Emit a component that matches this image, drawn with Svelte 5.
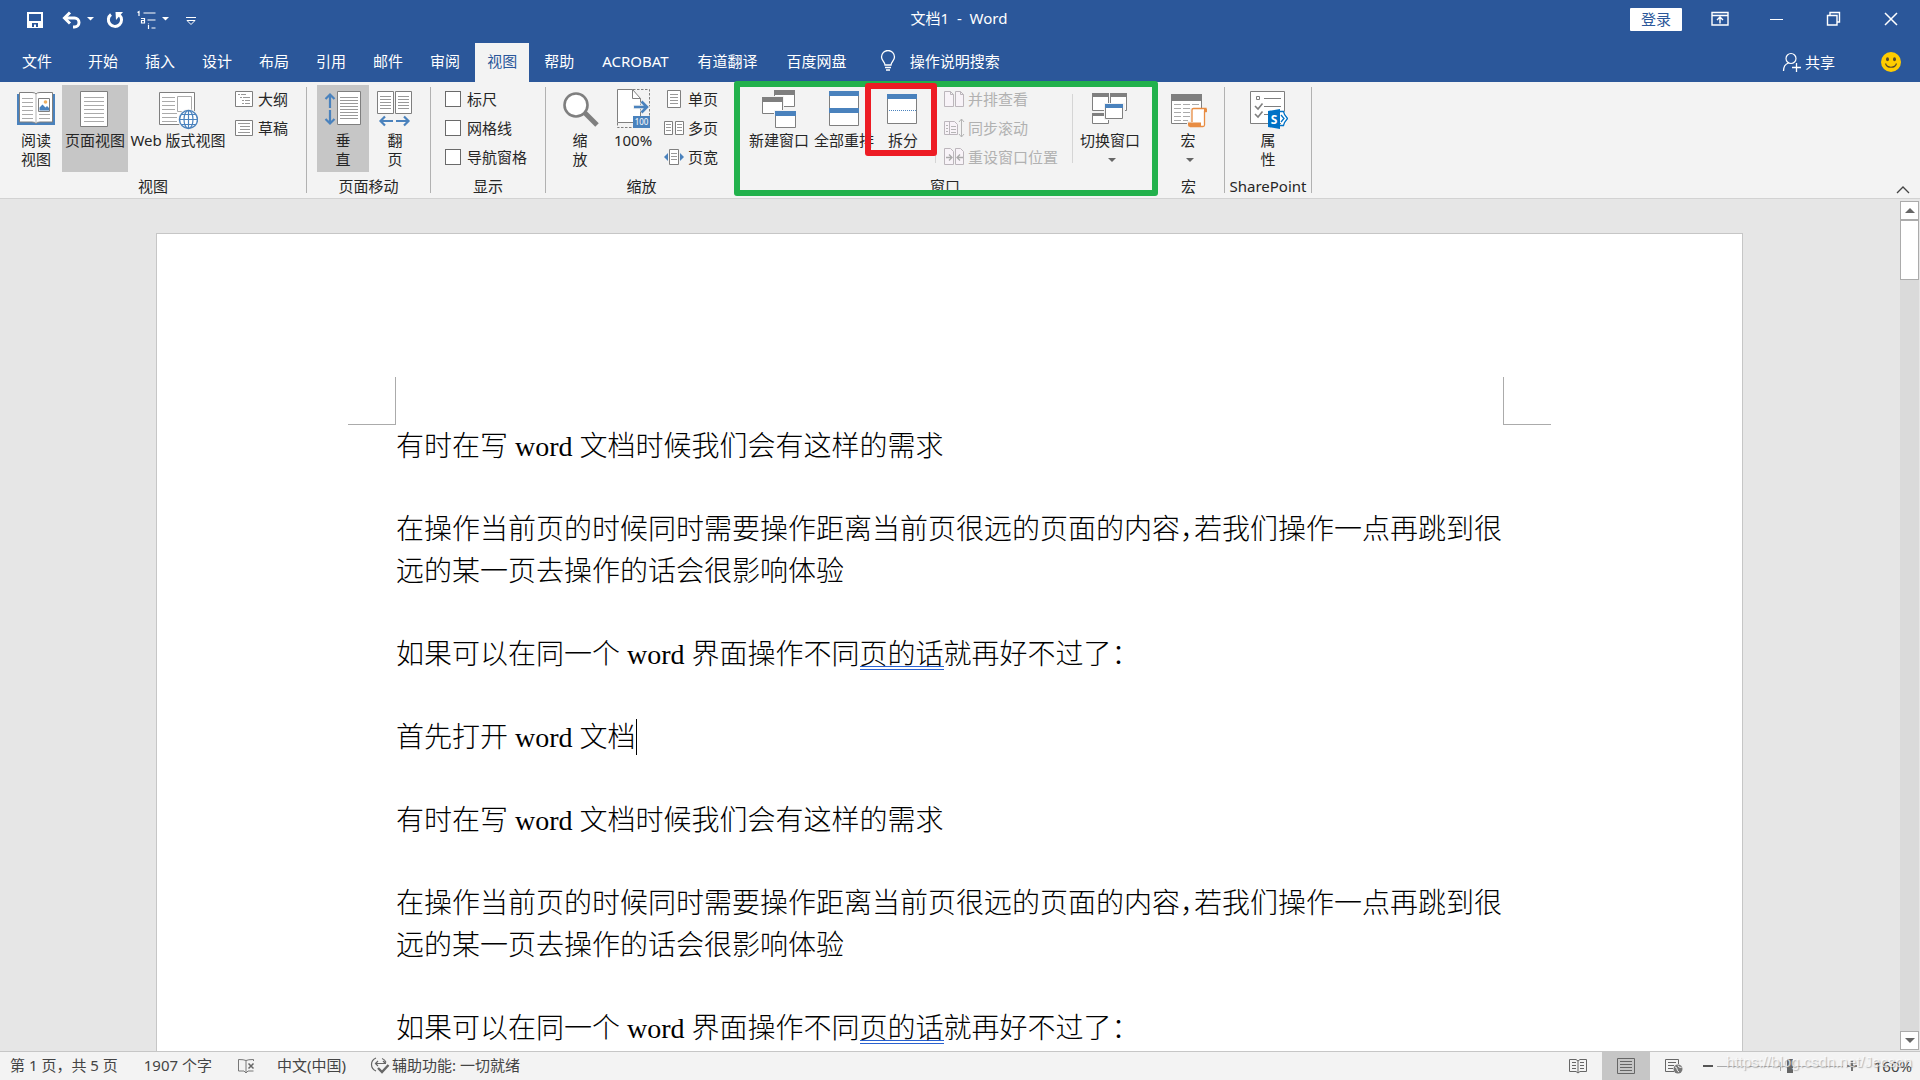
<script>
  const tabs = ['开始', '插入', '设计', '布局', '引用', '邮件', '审阅', '视图', '帮助'];
  const addins = ['ACROBAT', '有道翻译', '百度网盘'];
  const activeTab = '视图';
  const shows = ['标尺', '网格线', '导航窗格'];
  const passes = [0, 1];
  let zoom = $state(58);
</script>

<div class="app">
  <header>
    <div class="titlebar">
      <div class="quick">
        <button aria-label="保存"><svg width="18" height="18" viewBox="0 0 18 18"><path d="M1 1h16v16H1z" fill="#fff"/><path d="M3 3h12v7H3zM6 12h6v4h-2v-2.500H8V16H6z" fill="#2b579a"/></svg></button>
        <button aria-label="撤消" class="undo"><svg width="34" height="18" viewBox="0 0 34 18"><path d="M3 7h9.500a4.500 4.500 0 0 1 0 9H11" fill="none" stroke="#fff" stroke-width="3"/><path d="M8 1.500 2.500 7 8 12.500" fill="none" stroke="#fff" stroke-width="3"/><path d="M25 6h7l-3.500 3.500z" fill="#fff"/></svg></button>
        <button aria-label="重复"><svg width="18" height="18" viewBox="0 0 18 18"><path d="M5 3.500A6.600 6.600 0 1 0 13.500 4" fill="none" stroke="#fff" stroke-width="3"/><path d="M9.500 1H17L10 9z" fill="#fff"/></svg></button>
        <button aria-label="多级列表"><svg width="34" height="20" viewBox="0 0 34 20"><path d="M1.500 2.500 3 1.500V6M7.500 3h12M5 8.500h3.500V13H5.500v-2.500h3M11.500 10h8M12.500 13.500v.8M12.500 15v4M15.500 18h4" fill="none" stroke="#fff" stroke-width="1.200"/><path d="M26 7h7l-3.500 3.500z" fill="#fff"/></svg></button>
        <button aria-label="自定义快速访问工具栏"><svg width="12" height="18" viewBox="0 0 12 18"><path d="M1 6.500h10M2 9.500h8L6 13.500z" fill="none" stroke="#fff"/></svg></button>
      </div>
      <h1>文档1&nbsp; -&nbsp; Word</h1>
      <div class="wincontrols">
        <button class="login">登录</button>
        <button aria-label="功能区显示选项"><svg width="18" height="16" viewBox="0 0 18 16"><path d="M1 1.500h16v12.500H1zM1 4.500h16M9 12.500V6.500M6 9l3-3 3 3" fill="none" stroke="#fff" stroke-width="1.400"/></svg></button>
        <button aria-label="最小化"><svg width="18" height="16" viewBox="0 0 18 16"><path d="M2 8.500h13" stroke="#fff"/></svg></button>
        <button aria-label="还原"><svg width="18" height="16" viewBox="0 0 18 16"><path d="M2.500 4.500h9.500v9.500H2.500zM5 4V1.500h9.500V11H12" fill="none" stroke="#fff" stroke-width="1.400"/></svg></button>
        <button aria-label="关闭"><svg width="18" height="16" viewBox="0 0 18 16"><path d="M3 2l12 12M15 2 3 14" stroke="#fff" stroke-width="1.500"/></svg></button>
      </div>
    </div>
    <nav>
      <button class="tab file">文件</button>
      {#each tabs as tab}
        <button class="tab" class:active={tab === activeTab}>{tab}</button>
      {/each}
      {#each addins as tab}
        <button class="tab addin">{tab}</button>
      {/each}
      <button class="tell"><svg width="16" height="22" viewBox="0 0 16 22"><path d="M5 15c0-3-3.500-4.500-3.500-8a6.500 6.500 0 0 1 13 0c0 3.500-3.500 5-3.500 8zM5 17.500h6M6 20h4" fill="none" stroke="#fff" stroke-width="1.300"/></svg>操作说明搜索</button>
      <div class="navright">
        <button class="share"><svg width="20" height="20" viewBox="0 0 20 20"><circle cx="9" cy="6.500" r="5" fill="none" stroke="#fff" stroke-width="1.200"/><path d="M1.500 19c0-4 2-7 5-8M14.500 11v9M10 15.500h9" fill="none" stroke="#fff" stroke-width="1.300"/></svg>共享</button>
        <button aria-label="反馈"><svg width="20" height="20" viewBox="0 0 20 20"><circle cx="10" cy="10" r="10" fill="#fc0"/><ellipse cx="6.500" cy="7.300" rx="1.500" ry="2" fill="#594a2a"/><ellipse cx="13.500" cy="7.300" rx="1.500" ry="2" fill="#594a2a"/><path d="M4.500 11.500c1.500 5 9.500 5 11 0" fill="none" stroke="#594a2a" stroke-width="1.200"/></svg></button>
      </div>
    </nav>
  </header>

  <div class="ribbon">
    <section class="group view">
      <div class="items">
        <button class="big w52">
          <svg width="40" height="46" viewBox="0 0 40 46"><path d="M1 9h3v28h32V9h3v31H1z" fill="#4a82bd"/><path d="M3.500 7.500H16q3 0 4 1.500 1-1.500 4-1.500h12.500v29.500H24q-3 0-4 1.500-1-1.500-4-1.500H3.500z" fill="#fff" stroke="#7f7f7f"/><path d="M20 9v29" stroke="#b1b1b1"/><path d="M6 13.500h11M6 17.500h11M6 21.500h11M6 25.500h11M6 29.500h11M6 33.500h11M23 29.500h11M23 33.500h11" stroke="#aaa"/><path d="M22.500 13.500h11v13h-11z" fill="#fff" stroke="#7f7f7f"/><path d="M23.500 25.500v-3l3-3 3 3 1.500-1.500 2 2v2.500z" fill="#4a82bd"/><circle cx="29.500" cy="17" r="1.800" fill="#f0b060"/></svg>
          <span>阅读<br />视图</span>
        </button>
        <button class="big w66 pressed">
          <svg width="40" height="46" viewBox="0 0 40 46"><path d="M5.500 6.500h27v35h-27z" fill="#fff" stroke="#7f7f7f"/><path d="M9 12.500h20M9 16.500h20M9 20.500h20M9 24.500h20M9 28.500h20M9 32.500h20M9 36.500h20" stroke="#aaa"/></svg>
          <span>页面视图</span>
        </button>
        <button class="big w100">
          <svg width="40" height="46" viewBox="0 0 40 46"><path d="M1.500 7.500h35v32h-35z" fill="#fff" stroke="#7f7f7f"/><path d="M4 12.500h13M4 16.500h13M4 20.500h13M4 24.500h13M4 28.500h15M4 32.500h15M4 36.500h15" stroke="#aaa"/><path d="M19.500 11.500h14v15h-14z" fill="#fff" stroke="#aaa"/><circle cx="30.500" cy="34.500" r="10.500" fill="#f3f3f3"/><circle cx="30.500" cy="34.500" r="9" fill="#fff" stroke="#4a82bd" stroke-width="1.400"/><ellipse cx="30.500" cy="34.500" rx="4.500" ry="9" fill="none" stroke="#4a82bd" stroke-width="1.200"/><path d="M30.500 25.500v18M21.500 34.500h18M23 29.500h15M23 39.500h15" stroke="#4a82bd" stroke-width="1.200"/></svg>
          <span>Web 版式视图</span>
        </button>
        <div class="stack">
          <button class="row"><svg width="22" height="20" viewBox="0 0 22 20"><path d="M2.500 2.500h17v15h-17z" fill="#fff" stroke="#7f7f7f"/><path d="M5 5.500h2M8 5.500h5M7 8.500h2M10 8.500h7M9 11.500h2M12 11.500h5M9 14.500h2M12 14.500h5" stroke="#999"/></svg>大纲</button>
          <button class="row"><svg width="22" height="20" viewBox="0 0 22 20"><path d="M2.500 2.500h17v15h-17z" fill="#fff" stroke="#7f7f7f"/><path d="M5 5.500h12M7 8.500h10M7 11.500h10M5 14.500h12" stroke="#999"/></svg>草稿</button>
        </div>
      </div>
      <h2>视图</h2>
    </section>
    <i class="sep"></i>
    <section class="group move">
      <div class="items">
        <button class="big w52 pressed">
          <svg width="40" height="46" viewBox="0 0 40 46"><path d="M14.500 6.500h23v33h-23z" fill="#fff" stroke="#7f7f7f"/><path d="M17 12.500h18M17 15.500h18M17 18.500h18M17 21.500h18M17 24.500h18M17 27.500h18M17 30.500h18M17 33.500h18" stroke="#999"/><path d="M7 23V10M2.500 14 7 9.500l4.500 4.500M7 25v13M2.500 34 7 38.500l4.500-4.500" fill="none" stroke="#4a82bd" stroke-width="2.200"/></svg>
          <span>垂<br />直</span>
        </button>
        <button class="big w52">
          <svg width="40" height="46" viewBox="0 0 40 46"><path d="M2.500 6.500h16v22h-16zM20.500 6.500h16v22h-16z" fill="#fff" stroke="#7f7f7f"/><path d="M5 11.500h11M5 14.500h11M5 17.500h11M5 20.500h11M5 23.500h11M23 11.500h11M23 14.500h11M23 17.500h11M23 20.500h11M23 23.500h11" stroke="#999"/><path d="M18 36H6M10 31.500 5.500 36l4.500 4.500M21 36h12M29 31.500l4.500 4.500-4.500 4.500" fill="none" stroke="#4a82bd" stroke-width="2.200"/></svg>
          <span>翻<br />页</span>
        </button>
      </div>
      <h2>页面移动</h2>
    </section>
    <i class="sep"></i>
    <section class="group show">
      <div class="items">
        <div class="stack">
          {#each shows as s}
            <label class="row check"><input type="checkbox" />{s}</label>
          {/each}
        </div>
      </div>
      <h2>显示</h2>
    </section>
    <i class="sep"></i>
    <section class="group zoomg">
      <div class="items">
        <button class="big w52">
          <svg width="40" height="46" viewBox="0 0 40 46"><path d="M25 28 37 40" stroke="#7f7f7f" stroke-width="5"/><circle cx="16" cy="20" r="11.500" fill="#fff" stroke="#7f7f7f" stroke-width="2.600"/></svg>
          <span>缩<br />放</span>
        </button>
        <button class="big w54">
          <svg width="40" height="46" viewBox="0 0 40 46"><path d="M20 4.500h16.500v27M4.500 38v4.500h15" fill="none" stroke="#7f7f7f" stroke-dasharray="2.500 1.500"/><path d="M4.500 4.500h15l8 9V37.500h-23z" fill="#fff" stroke="#7f7f7f"/><path d="M19.500 4.500v9h8" fill="none" stroke="#7f7f7f"/><path d="M20 22h13M28.500 16.500 34 22l-5.500 5.500" fill="none" stroke="#f3f3f3" stroke-width="4.500"/><path d="M21 22h12M28.500 16.500 34 22l-5.500 5.500" fill="none" stroke="#4a82bd" stroke-width="2.600"/><path d="M20 31h17v12H20z" fill="#4a82bd"/><text x="28.500" y="40" text-anchor="middle" font-size="8" fill="#fff">100</text></svg>
          <span>100%</span>
        </button>
        <div class="stack">
          <button class="row"><svg width="22" height="20" viewBox="0 0 22 20"><path d="M4.500 1.500h13v17h-13z" fill="#fff" stroke="#7f7f7f"/><path d="M7 5.500h8M7 8.500h8M7 11.500h8M7 14.500h8" stroke="#999"/></svg>单页</button>
          <button class="row"><svg width="22" height="20" viewBox="0 0 22 20"><path d="M1.500 3.500h8v13h-8zM12.500 3.500h8v13h-8z" fill="#fff" stroke="#7f7f7f"/><path d="M3 6.500h5M3 9.500h5M3 12.500h5M14 6.500h5M14 9.500h5M14 12.500h5" stroke="#999"/></svg>多页</button>
          <button class="row"><svg width="22" height="20" viewBox="0 0 22 20"><path d="M6.500 2.500h9v15h-9z" fill="#fff" stroke="#7f7f7f"/><path d="M8 6.500h6M8 9.500h6M8 12.500h6" stroke="#999"/><path d="M5 6v8l-4-4zM17 6v8l4-4z" fill="#4a82bd"/></svg>页宽</button>
        </div>
      </div>
      <h2>缩放</h2>
    </section>
    <i class="sep"></i>
    <section class="group windowg">
      <div class="items">
        <button class="big w64">
          <svg width="40" height="46" viewBox="0 0 40 46"><path d="M15.500 5.500h20v16h-20z" fill="#fff" stroke="#7f7f7f"/><path d="M15 5h21v5H15z" fill="#7f7f7f"/><path d="M2 11h23v19H2z" fill="#f3f3f3"/><path d="M3.500 12.500h20v16h-20z" fill="#fff" stroke="#7f7f7f"/><path d="M3 12h21v5H3z" fill="#7f7f7f"/><path d="M15 25h23v19H15z" fill="#f3f3f3"/><path d="M16.500 26.500h20v16h-20z" fill="#fff" stroke="#7f7f7f"/><path d="M16 26h21v5H16z" fill="#4a82bd"/></svg>
          <span>新建窗口</span>
        </button>
        <button class="big w66">
          <svg width="40" height="46" viewBox="0 0 40 46"><path d="M5.500 6.500h29v34h-29z" fill="#fff" stroke="#7f7f7f"/><path d="M5 6h30v5H5zM5 23h30v5H5z" fill="#4a82bd"/></svg>
          <span>全部重排</span>
        </button>
        <button class="big w52 split">
          <svg width="40" height="46" viewBox="0 0 40 46"><path d="M4.500 9.500h29v29h-29z" fill="#fff" stroke="#7f7f7f"/><path d="M4 9h30v5H4z" fill="#4a82bd"/><path d="M6 25.500h27" stroke="#4a82bd" stroke-dasharray="1 1"/></svg>
          <span>拆分</span>
          <i class="mark red"></i>
        </button>
        <i class="minisep before"></i>
        <div class="stack">
          <button class="row" disabled><svg width="22" height="20" viewBox="0 0 22 20"><path d="M1.500 2.500h6l3 3v12h-9zM12.500 2.500h5l3 3v12h-8zM7.500 2.500v3h3M17.500 2.500v3h3" fill="#f8f3f8" stroke="#bcb6bc"/></svg>并排查看</button>
          <button class="row" disabled><svg width="22" height="20" viewBox="0 0 22 20"><path d="M1.500 3.500h10l3 3v10h-13zM6.500 3.500v13" fill="#f8f3f8" stroke="#bcb6bc"/><path d="M8 8.500h5M8 11.500h5M8 14.500h5M3 7.500h2M3 10.500h2M3 13.500h2M18.500 1v18M16 4l2.500-3L21 4M16 16l2.500 3 2.500-3" fill="none" stroke="#b5b5b5"/></svg>同步滚动</button>
          <button class="row" disabled><svg width="22" height="20" viewBox="0 0 22 20"><path d="M1.500 1.500h6l3 3v13h-9zM12.500 1.500h5l3 3v13h-8z" fill="#f8f3f8" stroke="#bcb6bc"/><path d="M3 10.500h6M6 7.500l3 3-3 3M20 10.500h-6M17 7.500l-3 3 3 3" fill="none" stroke="#aaa" stroke-width="1.300"/></svg>重设窗口位置</button>
        </div>
        <i class="minisep after"></i>
        <button class="big w60">
          <svg width="40" height="46" viewBox="0 0 40 46"><path d="M2.500 8.500h16v17h-16zM20.500 8.500h16v17h-16zM2.500 28.500h16v10h-16z" fill="#fff" stroke="#7f7f7f"/><path d="M2 8h17v4H2zM20 8h17v4H20zM2 28h17v3H2z" fill="#7f7f7f"/><path d="M14 18h21v17H14z" fill="#f3f3f3"/><path d="M15.500 19.500h17v14h-17z" fill="#fff" stroke="#7f7f7f"/><path d="M15 19h18v4H15z" fill="#4a82bd"/></svg>
          <span>切换窗口</span>
          <i class="caret"></i>
        </button>
      </div>
      <h2>窗口</h2>
      <i class="mark green"></i>
    </section>
    <i class="sep"></i>
    <section class="group macro">
      <div class="items">
        <button class="big w70">
          <svg width="40" height="46" viewBox="0 0 40 46"><path d="M3.500 9.500h30v29h-30z" fill="#fff" stroke="#7f7f7f"/><path d="M3 9h31v7H3z" fill="#7f7f7f"/><path d="M6 19.500h7M15 19.500h7M24 19.500h7M6 23.500h7M15 23.500h7M6 27.500h7M15 27.500h7M6 31.500h7M15 31.500h7M6 35.500h7M15 35.500h5" stroke="#aaa"/><path d="M22 23h18v4h-3v15H19v-6h3z" fill="#f3f3f3"/><path d="M24 37V25q0-1.500 1.500-1.500H38v3h-1.500V40q0 1.500-1.500 1.500H22" fill="#fff" stroke="#e88c42" stroke-width="1.300"/><path d="M20 37.500h13v4.500H22q-2 0-2-2zM36 24h3v3h-3z" fill="#e88c42"/></svg>
          <span>宏</span>
          <i class="caret"></i>
        </button>
      </div>
      <h2>宏</h2>
    </section>
    <i class="sep"></i>
    <section class="group sharepoint">
      <div class="items">
        <button class="big w86">
          <svg width="40" height="46" viewBox="0 0 40 46"><path d="M2.500 6.500h34v32h-34z" fill="#fff" stroke="#7f7f7f"/><path d="M8.500 11.500h3v3h-3zM16 13.500h17M16 21.500h17M16 29.500h6" fill="none" stroke="#7f7f7f"/><path d="M7 21l3 3 4.500-5.500M7 29l3 3 4.500-5.500" fill="none" stroke="#7f7f7f" stroke-width="1.600"/><path d="M33 26h3l5 7.500-5 7.500h-3z" fill="#fff"/><path d="M32 26.500h3.500l1 3 3 4-3 4-1 3H32M33 30l3 3.500-3 3.500" fill="none" stroke="#0072c6" stroke-width="1.300"/><path d="M20 26l12-2v20l-12-2z" fill="#0072c6"/><text x="26" y="38.500" text-anchor="middle" font-size="12" font-weight="700" fill="#fff">S</text></svg>
          <span>属<br />性</span>
        </button>
      </div>
      <h2>SharePoint</h2>
    </section>
    <i class="sep"></i>
    <button class="collapse" aria-label="折叠功能区"><svg width="14" height="8" viewBox="0 0 14 8"><path d="M1 7l6-6 6 6" fill="none" stroke="#444" stroke-width="1.300"/></svg></button>
  </div>

  <main>
    <div class="canvas">
      <article>
        <div class="corners"><i class="topleft"></i><i class="topright"></i></div>
        {#each passes as pass}
          <p>有时在写 <span class="latin">word</span> 文档时候我们会有这样的需求</p>
          <p>在操作当前页的时候同时需要操作距离当前页很远的页面的内容<span class="half">，</span>若我们操作一点再跳到很远的某一页去操作的话会很影响体验</p>
          <p>如果可以在同一个 <span class="latin">word</span> 界面操作不同<span class="grammar">页的话</span>就再好不过了：</p>
          {#if pass === 0}
            <p>首先打开 <span class="latin">word</span> 文档<span class="cursor"></span></p>
          {/if}
        {/each}
      </article>
    </div>
    <div class="scroll">
      <button aria-label="向上滚动"><svg width="10" height="5" viewBox="0 0 10 5"><path d="M0 5h10L5 0z" fill="#666"/></svg></button>
      <div class="thumb"></div>
      <button class="down" aria-label="向下滚动"><svg width="10" height="5" viewBox="0 0 10 5"><path d="M0 0h10L5 5z" fill="#666"/></svg></button>
    </div>
  </main>

  <footer>
    <span>第 1 页，共 5 页</span>
    <span class="words">1907 个字</span>
    <svg class="proof" width="18" height="16" viewBox="0 0 18 16"><path d="M9 2.500Q7 1.500 1.500 1.500v11.500H7l2 2 2-2h5.500M9 2.500v12M9 2.500q2-1 7.500-1V3" fill="none" stroke="#777"/><path d="M11.500 5.500l5 5M16.500 5.500l-5 5" stroke="#666" stroke-width="1.500"/></svg>
    <span class="lang">中文(中国)</span>
    <span class="access"><svg width="20" height="18" viewBox="0 0 20 18"><path d="M6 2Q1.500 4 1.500 8.500T6 15M12 2.500q3 1 4 4M5 7.500h11M8 5 5.500 7.500 8 10M13 5l2.500 2.500" fill="none" stroke="#666" stroke-width="1.200"/><path d="M8 12l4 4 6.500-7" fill="none" stroke="#666" stroke-width="2.400"/></svg>辅助功能: 一切就绪</span>
    <div class="controls">
      <button class="mode" aria-label="阅读视图"><svg width="18" height="16" viewBox="0 0 18 16"><path d="M.5 1.500H7L9 3l2-1.500h6.500v12H11L9 15l-2-1.500H.5zM9 3v12M3 4.500h4M3 7.500h4M3 10.500h4M11 4.500h4M11 7.500h4M11 10.500h4" fill="none" stroke="#666"/></svg></button>
      <button class="mode on" aria-label="页面视图"><svg width="18" height="16" viewBox="0 0 18 16"><path d="M.5.500h17v15H.5zM3 3.500h12M3 6.500h12M3 9.500h12M3 12.500h12" fill="none" stroke="#666"/></svg></button>
      <button class="mode" aria-label="Web 版式视图"><svg width="18" height="16" viewBox="0 0 18 16"><path d="M9 13.500H.5v-12h13V6M3 4.500h8M3 7.500h6M3 10.500h5" fill="none" stroke="#666"/><circle cx="13" cy="11" r="4.500" fill="#777"/><path d="M10 9q2 0 2 2t2 3M13 7.500q0 2 3.500 2" fill="none" stroke="#f3f3f3"/></svg></button>
      <button class="pm" aria-label="缩小"><svg width="12" height="12" viewBox="0 0 12 12"><path d="M1 6h10" stroke="#555" stroke-width="2"/></svg></button>
      <input type="range" min="0" max="100" bind:value={zoom} aria-label="显示比例" />
      <button class="pm" aria-label="放大"><svg width="12" height="12" viewBox="0 0 12 12"><path d="M1 6h10M6 1v10" stroke="#555" stroke-width="1.600"/></svg></button>
      <span class="pct">160%</span>
      <span class="watermark">https://blog.csdn.net/Jecson</span>
    </div>
  </footer>
</div>

<style>
  :global(body) { margin: 0; overflow: hidden; }
  .app { display: flex; flex-direction: column; height: 100vh; background: #e6e6e6; color: #262626; font: 15px/20px "Noto Sans", "Noto Sans CJK SC", sans-serif; }
  button { border: 0; background: none; padding: 0; margin: 0; font: inherit; color: inherit; white-space: nowrap; }
  svg { display: block; flex: none; }
  i { display: block; }
  h1, h2 { margin: 0; font: inherit; }

  header { background: #2b579a; color: #fff; }
  .titlebar { display: grid; grid-template-columns: 1fr auto 1fr; align-items: center; height: 43px; padding: 0 16px 0 26px; }
  .titlebar h1 { padding: 0 12px 7px 0; }
  .quick { display: flex; align-items: center; gap: 18px; padding-bottom: 3px; }
  .quick button:nth-child(3) { margin-left: -8px; }
  .quick button:nth-child(4) { margin-left: -6px; }
  .quick button:nth-child(5) { margin-left: -3px; }
  .wincontrols { display: flex; align-items: center; justify-content: flex-end; gap: 39px; padding: 0 4px 5px 0; }
  .wincontrols .login { margin-right: -10px; width: 52px; height: 23px; line-height: 21px; background: #fff; color: #2b579a; border-radius: 1px; }
  nav { display: flex; align-items: stretch; gap: 3px; height: 39px; padding: 0 19px 0 10px; }
  .tab { padding: 0 12px 4px; }
  .tab.file { margin-right: 9px; }
  .tab.addin { padding: 0 13px 4px; }
  .tab.active { background: #f3f3f3; color: #2b579a; }
  .tell { display: flex; align-items: center; gap: 14px; margin-left: 17px; padding-bottom: 4px; }
  .navright { display: flex; align-items: center; gap: 46px; margin-left: auto; padding-bottom: 2px; }
  .share { display: flex; align-items: center; gap: 3px; }

  .ribbon { display: flex; height: 116px; background: #f3f3f3; border-bottom: 1px solid #d2d2d2; flex: none; }
  .sep { width: 1px; margin: 5px 0; background: #b1b1b1; flex: none; }
  .group { position: relative; display: flex; flex-direction: column; flex: none; padding-top: 3px; box-sizing: border-box; }
  .group h2 { text-align: center; padding-top: 4px; line-height: 20px; }
  .items { display: flex; height: 87px; }
  .view { width: 306px; } .view .items { padding-left: 10px; }
  .move { width: 123px; } .move .items { padding-left: 10px; }
  .show { width: 114px; } .show .items { padding-left: 14px; }
  .zoomg { width: 191px; } .zoomg .items { padding-left: 8px; }
  .windowg { width: 414px; } .windowg .items { padding-left: 9px; }
  .macro { width: 71px; }
  .sharepoint { width: 86px; }
  .big { position: relative; display: flex; flex-direction: column; align-items: center; flex: none; line-height: 19px; }
  .big.pressed { background: #c6c6c6; }
  .w52 { width: 52px; } .w54 { width: 54px; } .w60 { width: 60px; } .w64 { width: 64px; } .w66 { width: 66px; }
  .w70 { width: 70px; } .w86 { width: 86px; } .w100 { width: 100px; }
  .stack { display: flex; flex-direction: column; gap: 1px; }
  .view .stack { margin-left: 5px; }
  .zoomg .stack { margin-left: 3px; }
  .row { display: flex; align-items: center; gap: 3px; height: 28px; white-space: nowrap; }
  .row:disabled { color: #b1b1b1; }
  .check { gap: 6px; }
  .check input { appearance: none; width: 16px; height: 16px; margin: 0; background: #fff; border: 1px solid #6a6a6a; }
  .minisep { width: 1px; margin: 9px 7px; background: #d5d5d5; }
  .minisep.before { margin-left: 6px; }
  .minisep.after { margin-left: 14px; }
  .caret { margin: 8px 0 0 4px; border: 4px solid transparent; border-top-color: #666; border-bottom: 0; }
  .mark { position: absolute; border-style: solid; pointer-events: none; border-radius: 3px; z-index: 1; }
  .mark.green { border: 6px solid #22b14c; inset: -1px -6px 2px -4px; }
  .mark.red { border: 6px solid #ed1c24; inset: -2px -8px 16px -12px; z-index: 2; }
  .collapse { align-self: flex-end; margin: 0 10px 4px auto; }

  main { flex: 1; min-height: 0; display: flex; }
  .canvas { flex: 1; overflow: hidden; padding: 34px 157px 0 156px; }
  article { border: 1px solid #c6c6c6; background: #fff; box-sizing: border-box; min-height: 1200px; padding: 143px 238px 0 239px; color: #000; font: 300 28px/42px "Liberation Serif", "Noto Sans CJK SC", serif; }
  article p { margin: 0 0 41px; text-align: left; line-break: anywhere; }
  .corners { display: flex; justify-content: space-between; margin: 0 -47px 1px -48px; }
  .corners i { width: 47px; height: 47px; border-bottom: 1px solid #ababab; }
  .corners .topleft { border-right: 1px solid #ababab; }
  .corners .topright { border-left: 1px solid #ababab; }
  .latin { font-weight: 400; }
  .half { font-feature-settings: "halt"; }
  .grammar { display: inline-block; line-height: 22px; border-bottom: 4px double #2a62d0; }
  .cursor { display: inline-block; width: 1px; height: 36px; background: #000; vertical-align: -8px; }
  .scroll { display: flex; flex-direction: column; width: 19px; margin: 2px 1px 1px 0; background: #dadada; }
  .scroll button { display: grid; place-items: center; height: 19px; background: #fff; border: 1px solid #ababab; box-sizing: border-box; }
  .scroll .thumb { height: 60px; box-sizing: border-box; background: #fff; border: 1px solid #ababab; }
  .scroll .down { margin-top: auto; }

  footer { display: flex; align-items: center; height: 28px; flex: none; padding-left: 10px; background: #f3f3f3; border-top: 1px solid #c6c6c6; color: #444; line-height: 18px; }
  footer > span { padding-bottom: 2px; }
  .words { margin-left: 26px; }
  .proof { margin-left: 25px; }
  .lang { margin-left: 22px; }
  .access { display: flex; align-items: center; gap: 2px; margin-left: 24px; }
  .controls { position: relative; display: flex; align-items: center; margin-left: auto; padding-right: 8px; height: 28px; }
  .mode { display: grid; place-items: center; width: 48px; height: 28px; }
  .mode.on { background: #c6c6c6; }
  .pm { width: 12px; }
  .mode + .pm { margin-left: 4px; }
  input[type="range"] { appearance: none; width: 126px; height: 16px; margin: 0 3px; background: linear-gradient(#aaa, #aaa) center / 1px 9px no-repeat, linear-gradient(#aaa, #aaa) center / 100% 1px no-repeat; }
  input[type="range"]::-webkit-slider-thumb { appearance: none; width: 6px; height: 14px; background: #666; border: 0; }
  .pct { width: 40px; margin-left: 14px; text-align: right; }
  .watermark { position: absolute; right: 8px; top: 0; color: rgba(255, 255, 255, 0.7); text-shadow: 1px 1px 1px rgba(120, 120, 120, 0.5); font: 15px/20px "Liberation Sans", sans-serif; pointer-events: none; }
</style>
